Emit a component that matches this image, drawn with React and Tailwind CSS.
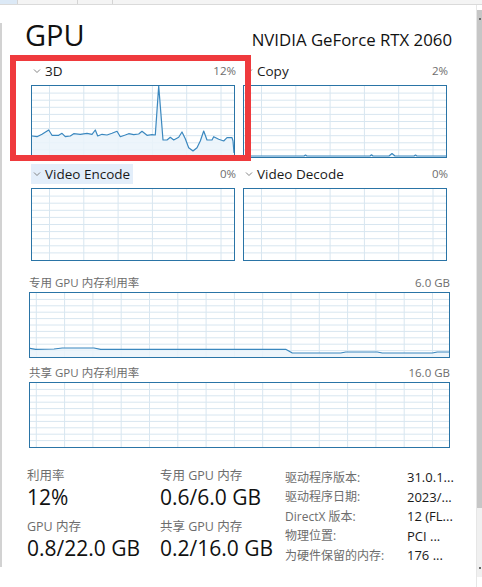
import React from "react";

const GRID = "#d8e6f0";
const LINE = "#3b88bf";
const FILL = "#eaf3fa";

const line3d = [
  [0, 50], [5, 50.7], [10, 48.3], [16.7, 44], [20, 49.3], [26.7, 49.3], [30, 47.3],
  [33.3, 50.7], [38.3, 50], [41.7, 47.7], [48.3, 48.3], [55, 47.3], [60, 48.3],
  [63.3, 44], [65.7, 50], [70, 48.3], [75, 49], [80, 47.3], [85, 45.3], [88.3, 50.7],
  [93.3, 49], [96.7, 47.7], [101.7, 48.7], [106.7, 48], [110, 45.3], [115, 49.3],
  [120, 48.7], [123.3, 49], [126.7, 0], [131, 54], [135, 54], [138.3, 51.3],
  [141.7, 54], [146.7, 51.3], [150, 46], [153.3, 52.7], [156.7, 61.7], [161, 65],
  [165, 61.7], [168.3, 55], [171.7, 45], [175, 54], [180, 54], [181.7, 50.7],
  [186.7, 53.3], [191.7, 55], [195, 51.7], [200, 51.7], [201, 55], [202, 67],
];

const lineCopy = [
  [0, 70], [3, 68.5], [7, 70], [60, 70], [61.5, 69], [63, 70], [126, 70], [127.5, 68.8],
  [129, 70], [145, 70], [148, 67.5], [151, 70], [170, 70], [171.5, 69], [173, 70], [202, 70],
];

const lineDedicated = [
  [0, 55.3], [5.7, 56.3], [24, 56], [32.3, 55], [64, 55], [70.7, 56.3], [255.7, 56.3],
  [262.3, 60], [310.7, 60], [315.7, 59], [347.3, 59], [352.3, 60], [402.3, 60],
  [407.3, 59], [420, 59],
];

function Chart({ width, height, colStep, colOffset, points }) {
  const w = width - 2;
  const h = height - 2;
  const cols = [];
  for (let x = colOffset; x < w; x += colStep) cols.push(x);
  const rows = [];
  for (let i = 1; i < 10; i++) rows.push((h * i) / 10);

  let path = null;
  let area = null;
  if (points) {
    path = points.map(([x, y], i) => `${i ? "L" : "M"}${x},${y}`).join(" ");
    area = `${path} L${points[points.length - 1][0]},${h} L${points[0][0]},${h} Z`;
  }

  return (
    <div className="border border-[#2a74a6] bg-white" style={{ width, height }}>
      <svg width={w} height={h} className="block">
        {cols.map((x) => (
          <line key={`c${x}`} x1={x} y1={0} x2={x} y2={h} stroke={GRID} strokeWidth="1" />
        ))}
        {rows.map((y) => (
          <line key={`r${y}`} x1={0} y1={y} x2={w} y2={y} stroke={GRID} strokeWidth="1" />
        ))}
        {area ? <path d={area} fill={FILL} fillOpacity="0.85" /> : null}
        {path ? (
          <path d={path} fill="none" stroke={LINE} strokeWidth="1.2" strokeLinejoin="round" />
        ) : null}
      </svg>
    </div>
  );
}

function Chevron() {
  return (
    <svg width="8" height="6" viewBox="0 0 8 6" className="mr-[4px] shrink-0">
      <path d="M1 1.5 L4 4.5 L7 1.5" fill="none" stroke="#777" strokeWidth="0.9" />
    </svg>
  );
}

function EngineHeader({ name, value, highlight }) {
  return (
    <div className="flex h-[20px] items-center justify-between">
      <div
        className={`flex h-[20px] items-center pl-[2px] pr-[3px] ${
          highlight ? "bg-[#e3eefa]" : ""
        }`}
      >
        <Chevron />
        <span className="text-[13.5px] text-[#1a1a1a]">{name}</span>
      </div>
      <span className="text-[11.5px] text-[#6d6d6d]">{value}</span>
    </div>
  );
}

function Engine({ name, value, highlight, points }) {
  return (
    <div className="flex flex-col">
      <EngineHeader name={name} value={value} highlight={highlight} />
      <div className="mt-[4px]">
        <Chart width={204} height={73} colStep={34.3} colOffset={17.5} points={points} />
      </div>
    </div>
  );
}

function MemoryChart({ label, value, points }) {
  return (
    <div className="ml-[27px] w-[421px]">
      <div className="flex h-[18px] items-center justify-between text-[11.5px] text-[#6d6d6d]">
        <span>{label}</span>
        <span>{value}</span>
      </div>
      <Chart width={421} height={66} colStep={28.3} colOffset={6.3} points={points} />
    </div>
  );
}

function Stat({ label, value }) {
  return (
    <div className="flex flex-col">
      <div className="flex h-[18px] items-center text-[12.5px] text-[#6d6d6d]">{label}</div>
      <div className="flex h-[24px] items-center text-[21px] leading-none text-[#111]">{value}</div>
    </div>
  );
}

const details = [
  ["驱动程序版本:", "31.0.1..."],
  ["驱动程序日期:", "2023/..."],
  ["DirectX 版本:", "12 (FL..."],
  ["物理位置:", "PCI ..."],
  ["为硬件保留的内存:", "176 ..."],
];

export default function App() {
  return (
    <div className="relative h-[587px] w-[482px] overflow-hidden bg-white font-['Open_Sans','Noto_Sans_CJK_SC',sans-serif] text-[#1a1a1a]">
      <div className="flex h-[5px] border-b border-[#dadada] bg-[#f4f4f4]">
        <div className="w-[18px] border-r border-[#d4d4d4] bg-[#dce9f6]" />
        <div className="w-[60px] border-r border-[#d4d4d4]" />
        <div className="w-[35px] border-r border-[#d4d4d4]" />
      </div>

      <div className="flex h-[582px]">
        <div className="mt-[18px] h-[544px] w-[2px] shrink-0 bg-[#d2d2d2]" />

        <main className="flex w-[474px] flex-col">
          <div className="flex h-[56px] items-baseline justify-between pl-[23px] pr-[24px] pt-[8px]">
            <h1 className="text-[29px] font-normal text-[#111]">GPU</h1>
            <span className="text-[16.8px] text-[#111]">NVIDIA GeForce RTX 2060</span>
          </div>

          <div className="ml-[29px] grid grid-cols-[205px_205px] gap-x-[7px] gap-y-[6px]">
            <Engine name="3D" value="12%" points={line3d} />
            <Engine name="Copy" value="2%" points={lineCopy} />
            <Engine name="Video Encode" value="0%" highlight />
            <Engine name="Video Decode" value="0%" />
          </div>

          <div className="mt-[13px]">
            <MemoryChart label="专用 GPU 内存利用率" value="6.0 GB" points={lineDedicated} />
          </div>
          <div className="mt-[6px]">
            <MemoryChart label="共享 GPU 内存利用率" value="16.0 GB" />
          </div>

          <div className="mt-[19px] flex pl-[25px]">
            <div className="flex w-[133px] flex-col gap-[9px]">
              <Stat label="利用率" value="12%" />
              <Stat label="GPU 内存" value="0.8/22.0 GB" />
            </div>
            <div className="flex w-[125px] flex-col gap-[9px]">
              <Stat label="专用 GPU 内存" value="0.6/6.0 GB" />
              <Stat label="共享 GPU 内存" value="0.2/16.0 GB" />
            </div>
            <div className="grid grid-cols-[122px_auto] pt-[1px]">
              {details.map(([k, v]) => (
                <React.Fragment key={k}>
                  <div className="flex h-[19.5px] items-center text-[12px] text-[#6d6d6d]">{k}</div>
                  <div className="flex h-[19.5px] items-center text-[13px] text-[#1a1a1a]">{v}</div>
                </React.Fragment>
              ))}
            </div>
          </div>
        </main>

        <div className="flex w-[6px] shrink-0 flex-col border-l border-[#e6e6e6]">
          <div className="mt-[5px] flex h-[498px] flex-col items-center bg-[#c6c6c6] pt-[8px]">
            <div className="h-[2px] w-[2px] bg-[#6a6a6a]" />
          </div>
          <div className="flex h-[69px] flex-col items-center justify-end bg-[#f0f0f0] pb-[8px]">
            <div className="h-[2px] w-[2px] bg-[#6a6a6a]" />
          </div>
        </div>
      </div>

      <div className="absolute left-[10px] top-[55px] h-[106px] w-[241px] border-[6px] border-[#ef3a3d]" />
    </div>
  );
}
